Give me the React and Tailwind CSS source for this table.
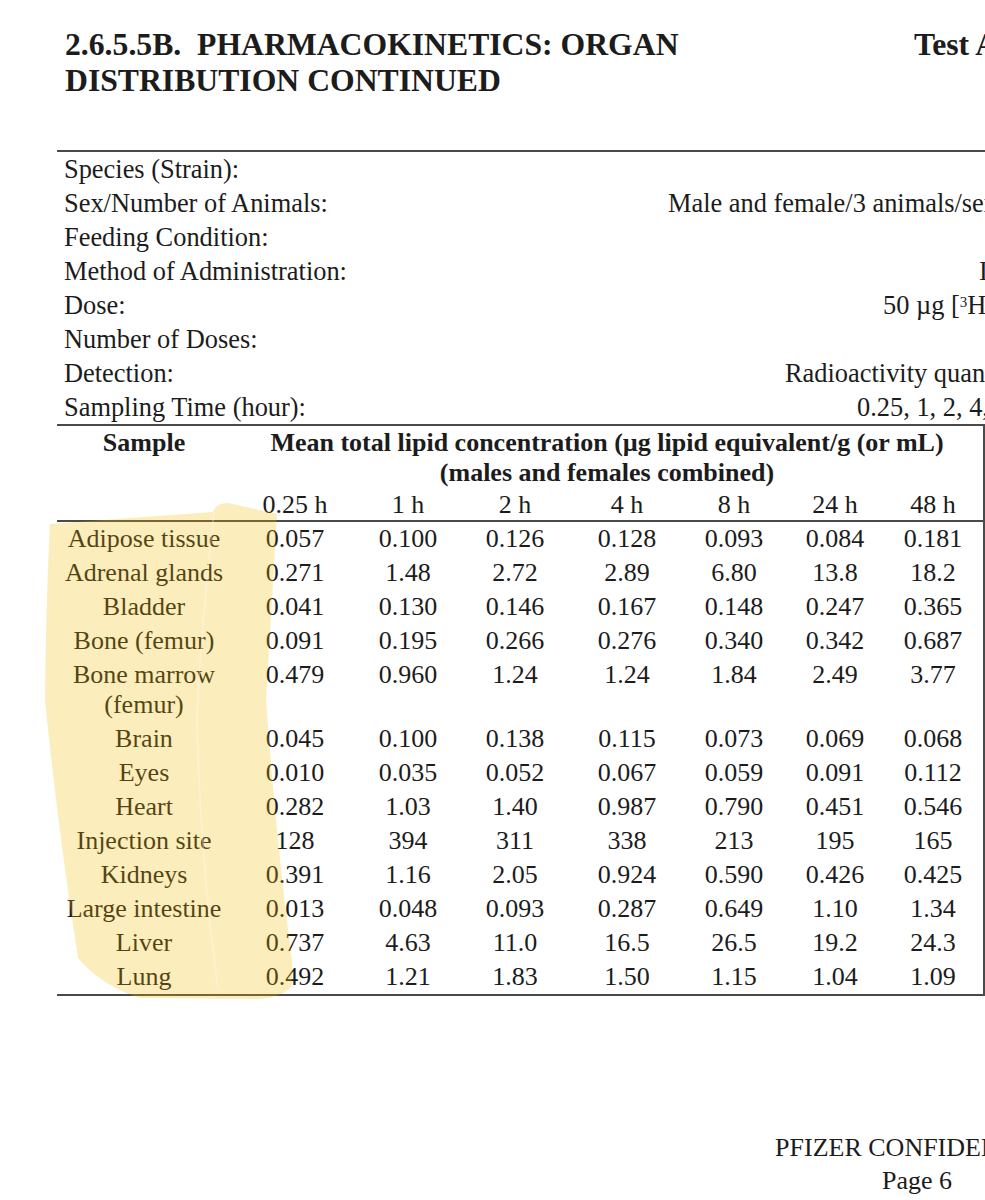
import React from 'react';

// Info block: label on the left, value starting at its own x (the page is cropped on the right)
const info = [
    { label: 'Species (Strain):', value: '', pad: 'ml-[0px]' },
    { label: 'Sex/Number of Animals:', value: 'Male and female/3 animals/sex/timepoint', pad: 'ml-[0px]' },
    { label: 'Feeding Condition:', value: '', pad: 'ml-[0px]' },
    { label: 'Method of Administration:', value: 'Intramuscular injection', pad: 'ml-[311px]' },
    { label: 'Dose:', value: 'dose', pad: 'ml-[215px]' },
    { label: 'Number of Doses:', value: '', pad: 'ml-[0px]' },
    { label: 'Detection:', value: 'Radioactivity quantitation using liquid scintillation counting', pad: 'ml-[117px]' },
    { label: 'Sampling Time (hour):', value: '0.25, 1, 2, 4, 8, 24 and 48 hours post-injection', pad: 'ml-[189px]' },
];

const times = ['0.25 h', '1 h', '2 h', '4 h', '8 h', '24 h', '48 h'];

const rows = [
    { name: 'Adipose tissue', v: ['0.057', '0.100', '0.126', '0.128', '0.093', '0.084', '0.181'] },
    { name: 'Adrenal glands', v: ['0.271', '1.48', '2.72', '2.89', '6.80', '13.8', '18.2'] },
    { name: 'Bladder', v: ['0.041', '0.130', '0.146', '0.167', '0.148', '0.247', '0.365'] },
    { name: 'Bone (femur)', v: ['0.091', '0.195', '0.266', '0.276', '0.340', '0.342', '0.687'] },
    { name: 'Bone marrow (femur)', v: ['0.479', '0.960', '1.24', '1.24', '1.84', '2.49', '3.77'], tall: true },
    { name: 'Brain', v: ['0.045', '0.100', '0.138', '0.115', '0.073', '0.069', '0.068'] },
    { name: 'Eyes', v: ['0.010', '0.035', '0.052', '0.067', '0.059', '0.091', '0.112'] },
    { name: 'Heart', v: ['0.282', '1.03', '1.40', '0.987', '0.790', '0.451', '0.546'] },
    { name: 'Injection site', v: ['128', '394', '311', '338', '213', '195', '165'] },
    { name: 'Kidneys', v: ['0.391', '1.16', '2.05', '0.924', '0.590', '0.426', '0.425'] },
    { name: 'Large intestine', v: ['0.013', '0.048', '0.093', '0.287', '0.649', '1.10', '1.34'] },
    { name: 'Liver', v: ['0.737', '4.63', '11.0', '16.5', '26.5', '19.2', '24.3'] },
    { name: 'Lung', v: ['0.492', '1.21', '1.83', '1.50', '1.15', '1.04', '1.09'] },
];

const cols = 'grid grid-cols-[174px_128px_98px_116px_108px_106px_96px_100px]';

const Highlight = () => (
    <svg className="pointer-events-none absolute left-0 top-0" width="985" height="1200" viewBox="0 0 985 1200">
        <path
            d="M 50 524 Q 130 518 213 512 Q 216 503 228 503 L 277 514 Q 272 600 266 700 Q 276 840 292 960 L 292 985 Q 285 997 258 999 L 140 998 Q 100 985 78 958 Q 58 830 45 700 Q 46 600 50 524 Z"
            fill="rgb(242,186,0)"
            fillOpacity="0.26"
        />
        <path d="M 214 512 Q 200 640 197 720 Q 200 860 218 990" fill="none" stroke="#ffffff" strokeWidth="1.5" strokeOpacity="0.35" />
    </svg>
);

const App = () => {
    return (
        <div className="relative w-[985px] h-[1200px] overflow-hidden bg-white text-[#1c1c1c] font-['Liberation_Serif',serif]">
            <div className="ml-[57px] w-[928px]">
                {/* heading */}
                <div className="flex pt-[27px] pl-[8px] text-[31.7px] leading-[36px] font-bold whitespace-nowrap">
                    <div className="w-[849px] shrink-0">
                        <div className="whitespace-pre">2.6.5.5B.  PHARMACOKINETICS: ORGAN</div>
                        <div>DISTRIBUTION CONTINUED</div>
                    </div>
                    <div>Test Article: BNT162b2</div>
                </div>

                {/* study info */}
                <div className="mt-[51px] border-t-2 border-[#4a4a4a] text-[26.4px] leading-[34px] whitespace-nowrap">
                    {info.map((row) => (
                        <div key={row.label} className="flex h-[34px] pl-[7px]">
                            <div className="w-[604px] shrink-0">{row.label}</div>
                            {row.value === 'dose' ? (
                                <div className={row.pad}>
                                    50 µg [<sup className="text-[15px]">3</sup>H]-08-A01-C01
                                </div>
                            ) : (
                                <div className={row.pad}>{row.value}</div>
                            )}
                        </div>
                    ))}
                </div>

                {/* table */}
                <div className="border-t-2 border-r-2 border-b-2 border-[#4a4a4a] text-[26px] whitespace-nowrap">
                    <div className="border-b-2 border-[#4a4a4a] pt-[2px]">
                        <div className={cols}>
                            <div className="text-center font-bold leading-[30px]">Sample</div>
                            <div className="col-span-7 text-center font-bold leading-[30px]">
                                Mean total lipid concentration (µg lipid equivalent/g (or mL)
                                <br />
                                (males and females combined)
                            </div>
                        </div>
                        <div className={`${cols} mt-[2px] leading-[30px]`}>
                            <div />
                            {times.map((t) => (
                                <div key={t} className="text-center">{t}</div>
                            ))}
                        </div>
                    </div>
                    {rows.map((r) => (
                        <div key={r.name} className={`${cols} ${r.tall ? 'py-[2px] leading-[30px]' : 'h-[34px] leading-[34px]'}`}>
                            <div className="text-center whitespace-normal">{r.name}</div>
                            {r.v.map((val, i) => (
                                <div key={i} className="text-center">{val}</div>
                            ))}
                        </div>
                    ))}
                </div>

                {/* footer */}
                <div className="mt-[135px] ml-[710px] w-[300px] flex flex-col items-center text-[26px] leading-[33px] whitespace-nowrap">
                    <div>PFIZER CONFIDENTIAL</div>
                    <div>Page 6</div>
                </div>
            </div>
            <Highlight />
        </div>
    );
};

export default App;
